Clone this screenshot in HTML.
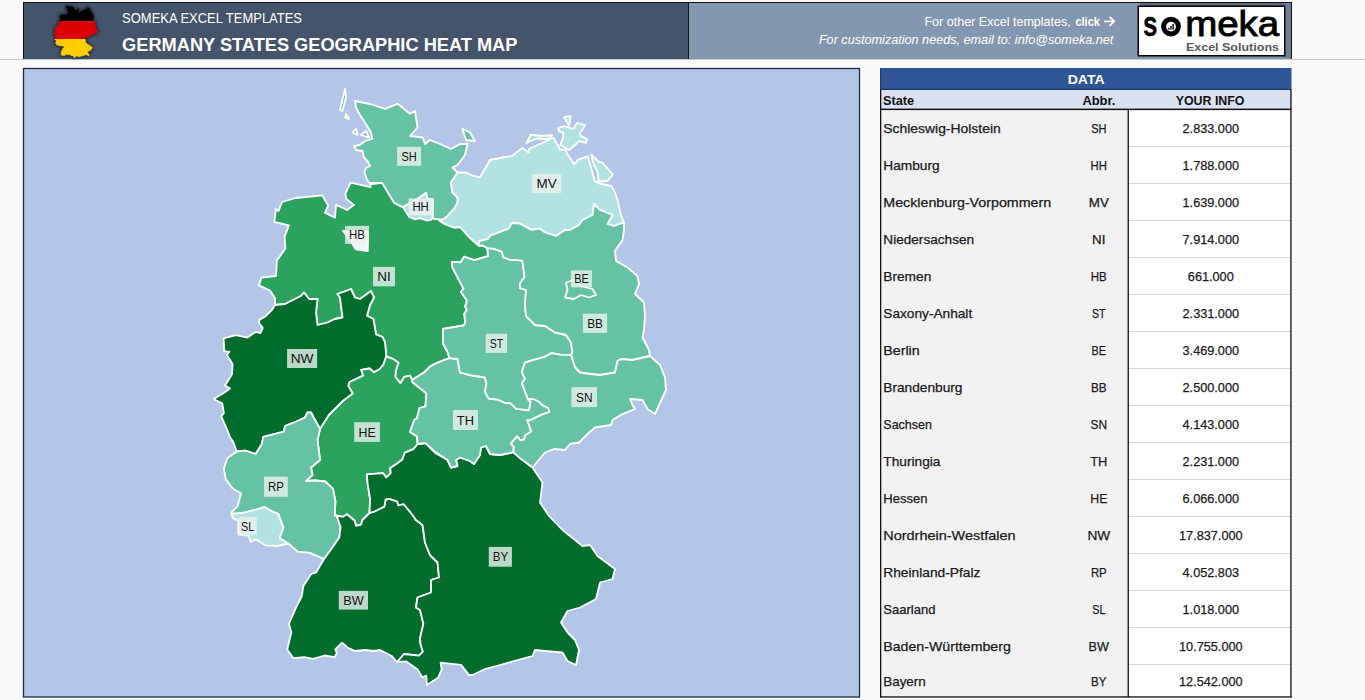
<!DOCTYPE html>
<html><head><meta charset="utf-8">
<style>
html,body{margin:0;padding:0;}
body{width:1365px;height:700px;overflow:hidden;background:#fafafa;position:relative;font-family:"Liberation Sans",sans-serif;}
.abs{position:absolute;}
svg{position:absolute;left:0;top:0;}
</style></head><body>
<svg width="1365" height="700" viewBox="0 0 1365 700" font-family="Liberation Sans, sans-serif">
<defs><linearGradient id="fg" gradientUnits="userSpaceOnUse" x1="0" y1="5" x2="0" y2="58">
<stop offset="0" stop-color="#000"/><stop offset="0.31" stop-color="#000"/><stop offset="0.31" stop-color="#dd0000"/><stop offset="0.65" stop-color="#dd0000"/><stop offset="0.65" stop-color="#ffce00"/><stop offset="1" stop-color="#ffce00"/></linearGradient></defs>
<!-- header -->
<rect x="23" y="2" width="1269" height="57" fill="#111"/>
<rect x="24" y="3" width="664" height="56" fill="#44546A"/>
<rect x="689" y="3" width="602" height="56" fill="#8497B0"/>
<rect x="0" y="59" width="1365" height="1" fill="#c8c8c8"/>
<filter id="blr" x="-20%" y="-20%" width="140%" height="140%"><feGaussianBlur stdDeviation="1.6"/></filter>
<g fill="#0b0f18" stroke="#0b0f18" stroke-width="2" filter="url(#blr)" opacity="0.75">
<polygon points="59.8,17.1 59.9,15.9 60.2,16.1 60.5,15.3 61.8,15.0 64.4,14.7 64.9,15.6 64.6,16.2 65.6,16.7 65.7,15.6 66.8,16.0 67.4,15.6 66.7,15.0 66.6,14.6 67.1,13.6 69.0,14.0 68.9,13.8 70.1,13.6 71.3,15.4 72.1,15.8 72.8,16.3 74.0,16.2 75.2,16.2 75.7,17.0 76.0,17.2 77.0,17.6 77.6,17.5 78.1,18.0 78.4,18.4 79.4,19.2 79.7,19.1 80.2,19.4 80.2,20.1 78.9,20.4 77.9,20.1 77.6,20.6 76.8,20.6 76.8,21.0 77.2,21.8 77.9,22.9 77.7,23.2 78.2,24.0 78.1,24.5 78.2,24.8 78.0,25.1 78.1,25.9 77.9,26.2 75.9,26.5 75.9,27.7 76.3,28.4 76.6,29.0 76.1,29.2 75.1,29.5 74.7,29.8 74.1,30.3 73.0,30.9 72.8,30.6 72.2,30.7 71.9,31.2 71.4,30.7 71.4,30.1 71.7,29.4 71.1,29.1 70.5,28.9 70.4,27.6 70.1,27.2 69.5,26.9 69.3,25.6 68.7,25.3 68.9,24.4 69.3,23.7 69.0,23.1 68.0,23.8 67.5,23.7 67.1,23.0 66.6,23.1 65.8,23.4 66.1,23.7 66.3,25.5 65.6,25.6 64.9,25.9 63.9,26.1 63.8,25.0 63.9,23.8 63.1,23.8 62.6,23.3 62.3,23.6 60.8,24.3 59.8,24.4 59.9,23.8 59.4,23.1 58.3,22.6 58.5,22.0 59.9,21.8 60.0,20.5 60.8,19.4 60.8,18.4 61.2,17.4"/>
<polygon points="67.5,6.5 68.9,6.7 70.4,7.1 71.6,6.7 72.8,7.6 73.3,7.3 73.5,8.8 72.8,9.5 74.0,9.7 74.2,10.2 74.7,9.9 75.7,10.2 76.7,10.7 77.6,10.2 78.3,10.2 78.0,11.2 77.3,12.1 76.8,12.3 77.3,12.7 76.7,13.6 76.8,14.5 77.3,14.9 77.3,15.4 77.0,15.9 76.4,16.6 75.9,16.9 75.1,16.8 74.9,16.7 75.0,15.1 74.4,15.0 74.3,14.5 73.5,15.0 72.1,15.8 71.3,15.4 70.1,13.6 68.9,13.6 68.7,13.4 68.4,12.7 68.6,12.3 68.9,12.2 68.7,11.7 68.4,11.4 68.2,10.8 67.6,10.8 67.4,10.4 68.0,10.3 68.5,10.0 69.2,9.8 69.0,9.2 68.6,8.5 68.0,7.7 67.6,7.0"/>
<polygon points="77.3,12.7 78.1,12.7 78.6,12.9 79.5,13.2 80.4,11.6 81.6,11.4 82.5,11.3 83.5,10.6 84.1,11.0 84.2,10.6 86.5,9.7 87.2,10.8 87.7,10.7 87.8,11.1 88.5,12.0 88.9,11.6 89.8,11.3 90.5,13.5 90.9,13.7 92.1,13.9 92.5,14.6 92.7,15.1 93.0,16.5 93.3,17.1 92.3,17.4 91.7,17.2 92.2,16.5 91.0,16.0 90.4,15.5 90.3,16.5 89.3,16.9 89.0,17.3 88.1,17.8 87.6,17.8 86.8,18.3 85.7,18.0 85.2,17.7 84.4,17.8 83.3,17.2 82.5,17.2 82.2,17.7 81.3,18.0 80.5,18.3 80.2,18.6 79.4,18.8 79.4,19.2 78.4,18.4 77.6,17.5 77.0,17.6 76.0,17.2 75.7,17.0 75.9,16.9 76.4,16.6 77.0,15.9 77.3,15.4 77.3,14.9 76.8,14.5 76.7,13.6"/>
<polygon points="59.8,24.4 60.8,24.3 62.3,23.6 62.6,23.3 63.1,23.8 63.9,23.8 63.8,25.0 63.9,26.1 64.9,25.9 65.6,25.6 66.3,25.5 66.1,23.7 65.8,23.4 66.6,23.1 67.1,23.0 67.5,23.7 68.0,23.8 69.0,23.1 69.3,23.7 68.9,24.4 68.7,25.3 69.3,25.6 69.5,26.9 70.1,27.2 70.4,27.6 70.5,28.9 70.3,29.5 69.9,30.0 69.3,30.3 68.9,29.9 68.1,30.0 68.3,30.6 67.0,31.1 66.9,31.4 67.3,32.1 66.4,32.8 65.0,34.0 64.2,35.2 63.7,34.5 63.3,33.8 63.0,33.8 62.7,34.2 62.0,34.5 60.8,35.0 60.7,35.5 58.7,35.9 58.6,36.6 58.0,37.4 57.0,37.1 56.2,37.2 55.8,36.4 55.5,35.9 55.3,35.3 54.7,34.1 54.9,33.8 54.8,33.0 54.1,32.7 54.0,32.6 54.9,32.1 55.5,31.7 55.0,31.4 55.7,30.4 55.8,29.5 55.2,28.7 55.5,28.5 55.0,28.4 54.9,27.3 56.1,27.0 57.2,27.2 58.0,26.7 58.4,26.8 58.7,26.4 58.3,25.9 58.4,25.6 58.9,25.4 59.5,24.8"/>
<polygon points="70.5,28.9 71.1,29.1 71.7,29.4 71.4,30.1 71.4,30.7 71.9,31.2 72.2,30.7 72.8,30.6 73.0,30.9 73.0,31.1 74.3,32.1 74.3,33.2 73.7,33.4 73.4,34.3 73.2,34.5 72.8,35.5 73.4,35.9 73.5,36.6 73.1,37.0 72.3,37.3 72.0,37.9 71.6,38.2 70.9,38.7 70.9,39.1 70.5,39.5 70.2,39.1 68.6,39.2 68.7,40.0 69.0,41.4 68.9,42.6 68.2,43.2 68.1,43.6 67.6,43.7 67.5,43.3 66.7,42.7 66.4,42.9 65.8,42.8 65.6,42.8 65.6,41.6 65.4,40.5 64.6,39.8 63.7,39.8 62.8,39.8 63.4,39.3 63.3,38.6 64.2,38.0 63.9,36.2 64.2,35.2 65.0,34.0 66.4,32.8 67.3,32.1 66.9,31.4 67.0,31.1 68.3,30.6 68.1,30.0 68.9,29.9 69.3,30.3 69.9,30.0 70.3,29.5"/>
<polygon points="64.2,35.2 63.7,34.5 63.3,33.8 63.0,33.8 62.7,34.2 62.0,34.5 60.8,35.0 60.7,35.5 58.7,35.9 58.6,36.6 58.0,37.4 57.0,37.1 56.2,37.2 55.3,37.8 54.9,38.7 55.1,39.6 55.8,40.4 56.6,40.9 56.3,42.0 55.7,42.6 55.7,42.7 56.8,42.6 57.9,42.3 58.8,42.1 59.6,42.5 60.2,42.7 60.6,43.9 60.3,44.8 61.1,45.3 62.0,46.0 63.2,46.1 64.5,46.7 65.4,45.6 66.0,44.8 66.1,43.9 65.8,42.8 65.6,42.8 65.6,41.6 65.4,40.5 64.6,39.8 63.7,39.8 62.8,39.8 63.4,39.3 63.3,38.6 64.2,38.0 63.9,36.2"/>
<polygon points="55.7,42.7 55.8,43.1 56.3,43.3 56.3,44.5 57.3,44.6 57.5,45.2 58.0,44.9 59.0,45.5 60.0,45.5 61.1,45.3 60.3,44.8 60.6,43.9 60.2,42.7 59.6,42.5 58.8,42.1 57.9,42.3 56.8,42.6"/>
<polygon points="64.5,46.7 65.4,45.6 66.0,44.8 66.1,43.9 65.8,42.8 66.4,42.9 66.7,42.7 67.5,43.3 67.6,43.7 68.1,43.6 68.2,43.2 68.9,42.6 69.3,42.5 70.3,42.1 70.4,41.4 70.8,41.4 71.5,41.6 71.7,41.9 72.2,41.8 72.8,42.5 73.0,42.8 73.4,43.2 74.0,43.7 74.2,45.2 74.7,46.3 75.4,47.0 75.6,48.3 74.8,48.5 74.8,49.6 73.5,50.0 73.4,50.9 73.7,51.1 74.1,52.3 73.7,53.6 73.8,54.1 74.0,54.8 73.6,55.1 72.2,55.0 71.5,55.7 71.0,55.1 69.9,54.6 69.3,54.7 68.5,54.6 67.5,54.7 66.8,54.4 66.3,54.0 65.6,54.6 65.8,54.9 65.5,55.3 64.6,55.1 63.5,55.4 62.7,55.3 61.6,55.3 61.0,54.6 61.4,53.1 61.2,52.3 61.8,51.0 62.4,49.9 62.6,49.0 63.3,48.0 63.8,47.8"/>
<polygon points="73.5,36.6 74.3,36.5 75.2,37.3 76.4,38.0 76.7,38.6 77.3,38.5 77.2,38.0 77.6,37.7 78.5,38.0 78.9,38.3 79.5,37.5 79.6,36.9 80.1,36.7 80.4,37.4 81.4,37.5 82.6,37.3 82.7,37.3 83.3,37.8 84.5,38.6 85.5,39.9 85.2,41.7 86.1,42.9 87.4,44.1 89.3,45.5 90.0,45.4 90.7,46.4 92.4,47.5 92.2,48.4 91.0,48.7 90.6,50.2 89.1,50.9 87.9,51.2 87.2,52.2 87.9,53.1 88.6,53.8 89.0,54.6 88.7,56.0 87.9,55.6 87.4,54.9 85.7,54.7 84.8,54.6 84.5,55.2 81.4,56.0 80.0,56.3 78.8,56.8 78.4,56.8 77.7,55.9 75.7,55.7 75.8,56.3 75.5,57.0 74.4,57.7 74.3,56.9 74.0,57.0 73.5,56.3 72.4,55.6 71.5,55.7 72.2,55.0 73.6,55.1 74.0,54.8 73.8,54.1 73.7,53.6 74.1,52.3 73.7,51.1 73.4,50.9 73.5,50.0 74.8,49.6 74.8,48.5 75.6,48.3 75.4,47.0 74.7,46.3 74.2,45.2 74.0,43.7 73.4,43.2 73.0,42.8 72.8,42.5 72.2,41.8 71.7,41.9 71.5,41.6 70.8,41.4 70.4,41.4 70.3,42.1 69.3,42.5 68.9,42.6 69.0,41.4 68.7,40.0 68.6,39.2 70.2,39.1 70.5,39.5 70.9,39.1 70.9,38.7 71.6,38.2 72.0,37.9 72.3,37.3 73.1,37.0"/>
<polygon points="73.0,30.9 74.1,30.3 74.7,29.8 75.1,29.5 76.1,29.2 76.6,29.0 77.3,29.1 77.6,30.3 78.5,30.5 80.0,30.7 80.1,31.3 80.0,32.0 80.3,32.6 81.2,32.7 81.8,32.9 82.4,33.0 83.0,33.5 83.6,33.5 84.2,33.6 84.3,32.9 84.1,32.7 84.5,32.6 85.1,32.9 85.4,33.1 86.0,33.4 86.1,33.7 85.3,34.0 84.4,34.4 84.0,34.4 84.2,35.1 84.4,35.5 83.8,35.8 83.7,36.2 83.3,36.2 83.0,35.9 82.4,36.5 82.7,36.8 82.7,37.3 82.6,37.3 81.4,37.5 80.4,37.4 80.1,36.7 79.6,36.9 79.5,37.5 78.9,38.3 78.5,38.0 77.6,37.7 77.2,38.0 77.3,38.5 76.7,38.6 76.4,38.0 75.1,37.2 74.3,36.5 73.5,36.6 73.4,35.9 72.8,35.5 73.2,34.5 73.4,34.3 73.7,33.4 74.3,33.2 74.3,32.1 73.0,31.1"/>
<polygon points="76.8,20.6 77.6,20.6 77.9,20.1 78.9,20.4 80.2,20.1 80.2,19.4 80.8,19.4 81.6,19.7 81.7,20.2 82.3,20.4 83.1,20.4 83.5,20.5 83.8,21.9 83.3,22.5 83.3,22.9 83.9,23.0 83.8,24.4 83.9,25.3 84.8,26.1 85.7,26.2 86.7,26.8 87.7,27.0 88.2,27.6 88.3,28.5 88.2,28.7 87.1,28.7 86.3,28.6 85.6,28.9 84.5,29.2 83.8,29.4 83.5,30.2 83.8,30.9 83.5,31.2 84.1,32.7 84.3,32.9 84.2,33.6 83.6,33.5 83.0,33.5 82.4,33.0 81.8,32.9 81.2,32.7 80.3,32.6 80.0,32.0 80.1,31.3 80.0,30.7 78.5,30.5 77.6,30.3 77.3,29.1 76.6,29.0 76.3,28.4 75.9,27.7 75.9,26.5 77.9,26.2 78.1,25.9 78.0,25.1 78.2,24.8 78.1,24.5 78.2,24.0 77.7,23.2 77.9,22.9 77.2,21.8 76.8,21.0"/>
<polygon points="79.4,19.2 79.4,18.8 80.2,18.6 80.5,18.3 81.3,18.0 82.2,17.7 82.5,17.2 83.3,17.2 84.4,17.8 85.2,17.7 85.7,18.0 86.8,18.3 87.6,17.8 88.1,17.8 89.0,17.3 89.3,16.9 90.3,16.5 90.4,15.5 91.0,16.0 92.2,16.5 91.7,17.2 92.3,17.4 93.3,17.1 93.3,17.8 93.1,18.7 92.4,19.6 92.5,20.5 93.6,21.1 94.6,21.8 94.7,22.5 94.3,23.4 95.2,24.1 95.3,25.3 95.2,26.6 95.0,27.2 95.7,28.3 95.8,28.8 94.1,29.2 93.0,29.1 92.7,29.3 92.4,30.3 91.0,30.5 90.0,30.4 89.1,30.3 88.6,29.8 88.2,28.7 88.3,28.5 88.2,27.6 87.7,27.0 86.7,26.8 85.7,26.2 84.8,26.1 83.9,25.3 83.8,24.4 83.9,23.0 83.3,22.9 83.3,22.5 83.8,21.9 83.5,20.5 83.1,20.4 82.3,20.4 81.7,20.2 81.6,19.7 80.8,19.4 80.2,19.4 79.7,19.1"/>
<polygon points="88.2,28.7 88.6,29.8 89.1,30.3 90.0,30.4 91.0,30.5 92.4,30.3 92.7,29.3 93.0,29.1 94.1,29.2 95.8,28.8 96.7,29.6 97.2,30.7 97.3,31.8 97.0,32.5 96.2,33.9 95.5,33.5 95.0,32.7 93.9,32.6 94.1,33.1 94.3,33.5 93.1,33.9 92.2,34.5 92.0,34.9 90.5,35.1 89.8,35.7 89.0,36.4 88.1,36.6 87.6,37.1 86.6,37.0 85.7,37.3 84.5,38.6 83.3,37.8 82.7,37.3 82.7,36.8 82.4,36.5 83.0,35.9 83.3,36.2 83.7,36.2 83.8,35.8 84.4,35.5 84.2,35.1 84.0,34.4 84.4,34.4 85.3,34.0 86.1,33.7 86.0,33.4 85.4,33.1 85.1,32.9 84.5,32.6 84.1,32.7 83.5,31.2 83.8,30.9 83.5,30.2 83.8,29.4 84.5,29.2 85.6,28.9 86.3,28.6 87.1,28.7"/>
<polygon points="87.7,22.4 88.5,22.2 89.2,22.7 90.3,23.0 90.6,23.5 89.9,23.7 89.2,23.5 88.5,23.8 87.6,23.7 87.9,23.0"/>
<polygon points="72.1,15.8 73.5,15.0 74.3,14.5 74.4,15.0 75.0,15.1 74.9,16.7 74.8,16.9 74.4,17.0 73.7,16.7 73.3,16.8 72.7,16.6"/>
<polygon points="66.3,17.8 66.8,18.0 67.8,17.9 68.8,18.0 68.8,19.0 68.7,19.6 67.6,19.5 67.2,18.9"/>
<polygon points="66.1,7.2 66.5,5.4 66.6,6.1 66.3,7.3"/>
<polygon points="66.6,7.6 66.9,8.0 66.5,7.9"/>
<polygon points="67.3,9.2 67.6,8.9 67.7,9.4"/>
<polygon points="68.1,9.4 68.6,9.1 68.8,9.7"/>
<polygon points="77.8,8.9 78.5,9.2 79.0,10.0 78.1,9.9"/>
<polygon points="87.0,8.8 87.5,8.7 88.5,8.9 88.8,8.4 89.6,8.6 89.1,9.3 89.1,9.5 89.8,9.8 89.6,10.1 89.0,10.0 88.0,10.8 87.2,10.3 87.4,9.8 87.5,9.2 87.0,9.1"/>
<polygon points="87.5,7.9 88.2,7.8 88.0,8.6"/>
<polygon points="84.0,10.1 84.3,9.4 85.4,9.5 86.4,9.5 86.0,9.8 85.0,9.7 84.3,10.0"/>
<polygon points="90.1,11.1 90.9,11.8 91.2,11.9 92.2,12.9 91.7,13.5 90.9,13.5 90.7,12.7 90.4,12.1"/>
</g>
<g fill="url(#fg)" stroke="url(#fg)" stroke-width="0.8">
<polygon points="59.8,17.1 59.9,15.9 60.2,16.1 60.5,15.3 61.8,15.0 64.4,14.7 64.9,15.6 64.6,16.2 65.6,16.7 65.7,15.6 66.8,16.0 67.4,15.6 66.7,15.0 66.6,14.6 67.1,13.6 69.0,14.0 68.9,13.8 70.1,13.6 71.3,15.4 72.1,15.8 72.8,16.3 74.0,16.2 75.2,16.2 75.7,17.0 76.0,17.2 77.0,17.6 77.6,17.5 78.1,18.0 78.4,18.4 79.4,19.2 79.7,19.1 80.2,19.4 80.2,20.1 78.9,20.4 77.9,20.1 77.6,20.6 76.8,20.6 76.8,21.0 77.2,21.8 77.9,22.9 77.7,23.2 78.2,24.0 78.1,24.5 78.2,24.8 78.0,25.1 78.1,25.9 77.9,26.2 75.9,26.5 75.9,27.7 76.3,28.4 76.6,29.0 76.1,29.2 75.1,29.5 74.7,29.8 74.1,30.3 73.0,30.9 72.8,30.6 72.2,30.7 71.9,31.2 71.4,30.7 71.4,30.1 71.7,29.4 71.1,29.1 70.5,28.9 70.4,27.6 70.1,27.2 69.5,26.9 69.3,25.6 68.7,25.3 68.9,24.4 69.3,23.7 69.0,23.1 68.0,23.8 67.5,23.7 67.1,23.0 66.6,23.1 65.8,23.4 66.1,23.7 66.3,25.5 65.6,25.6 64.9,25.9 63.9,26.1 63.8,25.0 63.9,23.8 63.1,23.8 62.6,23.3 62.3,23.6 60.8,24.3 59.8,24.4 59.9,23.8 59.4,23.1 58.3,22.6 58.5,22.0 59.9,21.8 60.0,20.5 60.8,19.4 60.8,18.4 61.2,17.4"/>
<polygon points="67.5,6.5 68.9,6.7 70.4,7.1 71.6,6.7 72.8,7.6 73.3,7.3 73.5,8.8 72.8,9.5 74.0,9.7 74.2,10.2 74.7,9.9 75.7,10.2 76.7,10.7 77.6,10.2 78.3,10.2 78.0,11.2 77.3,12.1 76.8,12.3 77.3,12.7 76.7,13.6 76.8,14.5 77.3,14.9 77.3,15.4 77.0,15.9 76.4,16.6 75.9,16.9 75.1,16.8 74.9,16.7 75.0,15.1 74.4,15.0 74.3,14.5 73.5,15.0 72.1,15.8 71.3,15.4 70.1,13.6 68.9,13.6 68.7,13.4 68.4,12.7 68.6,12.3 68.9,12.2 68.7,11.7 68.4,11.4 68.2,10.8 67.6,10.8 67.4,10.4 68.0,10.3 68.5,10.0 69.2,9.8 69.0,9.2 68.6,8.5 68.0,7.7 67.6,7.0"/>
<polygon points="77.3,12.7 78.1,12.7 78.6,12.9 79.5,13.2 80.4,11.6 81.6,11.4 82.5,11.3 83.5,10.6 84.1,11.0 84.2,10.6 86.5,9.7 87.2,10.8 87.7,10.7 87.8,11.1 88.5,12.0 88.9,11.6 89.8,11.3 90.5,13.5 90.9,13.7 92.1,13.9 92.5,14.6 92.7,15.1 93.0,16.5 93.3,17.1 92.3,17.4 91.7,17.2 92.2,16.5 91.0,16.0 90.4,15.5 90.3,16.5 89.3,16.9 89.0,17.3 88.1,17.8 87.6,17.8 86.8,18.3 85.7,18.0 85.2,17.7 84.4,17.8 83.3,17.2 82.5,17.2 82.2,17.7 81.3,18.0 80.5,18.3 80.2,18.6 79.4,18.8 79.4,19.2 78.4,18.4 77.6,17.5 77.0,17.6 76.0,17.2 75.7,17.0 75.9,16.9 76.4,16.6 77.0,15.9 77.3,15.4 77.3,14.9 76.8,14.5 76.7,13.6"/>
<polygon points="59.8,24.4 60.8,24.3 62.3,23.6 62.6,23.3 63.1,23.8 63.9,23.8 63.8,25.0 63.9,26.1 64.9,25.9 65.6,25.6 66.3,25.5 66.1,23.7 65.8,23.4 66.6,23.1 67.1,23.0 67.5,23.7 68.0,23.8 69.0,23.1 69.3,23.7 68.9,24.4 68.7,25.3 69.3,25.6 69.5,26.9 70.1,27.2 70.4,27.6 70.5,28.9 70.3,29.5 69.9,30.0 69.3,30.3 68.9,29.9 68.1,30.0 68.3,30.6 67.0,31.1 66.9,31.4 67.3,32.1 66.4,32.8 65.0,34.0 64.2,35.2 63.7,34.5 63.3,33.8 63.0,33.8 62.7,34.2 62.0,34.5 60.8,35.0 60.7,35.5 58.7,35.9 58.6,36.6 58.0,37.4 57.0,37.1 56.2,37.2 55.8,36.4 55.5,35.9 55.3,35.3 54.7,34.1 54.9,33.8 54.8,33.0 54.1,32.7 54.0,32.6 54.9,32.1 55.5,31.7 55.0,31.4 55.7,30.4 55.8,29.5 55.2,28.7 55.5,28.5 55.0,28.4 54.9,27.3 56.1,27.0 57.2,27.2 58.0,26.7 58.4,26.8 58.7,26.4 58.3,25.9 58.4,25.6 58.9,25.4 59.5,24.8"/>
<polygon points="70.5,28.9 71.1,29.1 71.7,29.4 71.4,30.1 71.4,30.7 71.9,31.2 72.2,30.7 72.8,30.6 73.0,30.9 73.0,31.1 74.3,32.1 74.3,33.2 73.7,33.4 73.4,34.3 73.2,34.5 72.8,35.5 73.4,35.9 73.5,36.6 73.1,37.0 72.3,37.3 72.0,37.9 71.6,38.2 70.9,38.7 70.9,39.1 70.5,39.5 70.2,39.1 68.6,39.2 68.7,40.0 69.0,41.4 68.9,42.6 68.2,43.2 68.1,43.6 67.6,43.7 67.5,43.3 66.7,42.7 66.4,42.9 65.8,42.8 65.6,42.8 65.6,41.6 65.4,40.5 64.6,39.8 63.7,39.8 62.8,39.8 63.4,39.3 63.3,38.6 64.2,38.0 63.9,36.2 64.2,35.2 65.0,34.0 66.4,32.8 67.3,32.1 66.9,31.4 67.0,31.1 68.3,30.6 68.1,30.0 68.9,29.9 69.3,30.3 69.9,30.0 70.3,29.5"/>
<polygon points="64.2,35.2 63.7,34.5 63.3,33.8 63.0,33.8 62.7,34.2 62.0,34.5 60.8,35.0 60.7,35.5 58.7,35.9 58.6,36.6 58.0,37.4 57.0,37.1 56.2,37.2 55.3,37.8 54.9,38.7 55.1,39.6 55.8,40.4 56.6,40.9 56.3,42.0 55.7,42.6 55.7,42.7 56.8,42.6 57.9,42.3 58.8,42.1 59.6,42.5 60.2,42.7 60.6,43.9 60.3,44.8 61.1,45.3 62.0,46.0 63.2,46.1 64.5,46.7 65.4,45.6 66.0,44.8 66.1,43.9 65.8,42.8 65.6,42.8 65.6,41.6 65.4,40.5 64.6,39.8 63.7,39.8 62.8,39.8 63.4,39.3 63.3,38.6 64.2,38.0 63.9,36.2"/>
<polygon points="55.7,42.7 55.8,43.1 56.3,43.3 56.3,44.5 57.3,44.6 57.5,45.2 58.0,44.9 59.0,45.5 60.0,45.5 61.1,45.3 60.3,44.8 60.6,43.9 60.2,42.7 59.6,42.5 58.8,42.1 57.9,42.3 56.8,42.6"/>
<polygon points="64.5,46.7 65.4,45.6 66.0,44.8 66.1,43.9 65.8,42.8 66.4,42.9 66.7,42.7 67.5,43.3 67.6,43.7 68.1,43.6 68.2,43.2 68.9,42.6 69.3,42.5 70.3,42.1 70.4,41.4 70.8,41.4 71.5,41.6 71.7,41.9 72.2,41.8 72.8,42.5 73.0,42.8 73.4,43.2 74.0,43.7 74.2,45.2 74.7,46.3 75.4,47.0 75.6,48.3 74.8,48.5 74.8,49.6 73.5,50.0 73.4,50.9 73.7,51.1 74.1,52.3 73.7,53.6 73.8,54.1 74.0,54.8 73.6,55.1 72.2,55.0 71.5,55.7 71.0,55.1 69.9,54.6 69.3,54.7 68.5,54.6 67.5,54.7 66.8,54.4 66.3,54.0 65.6,54.6 65.8,54.9 65.5,55.3 64.6,55.1 63.5,55.4 62.7,55.3 61.6,55.3 61.0,54.6 61.4,53.1 61.2,52.3 61.8,51.0 62.4,49.9 62.6,49.0 63.3,48.0 63.8,47.8"/>
<polygon points="73.5,36.6 74.3,36.5 75.2,37.3 76.4,38.0 76.7,38.6 77.3,38.5 77.2,38.0 77.6,37.7 78.5,38.0 78.9,38.3 79.5,37.5 79.6,36.9 80.1,36.7 80.4,37.4 81.4,37.5 82.6,37.3 82.7,37.3 83.3,37.8 84.5,38.6 85.5,39.9 85.2,41.7 86.1,42.9 87.4,44.1 89.3,45.5 90.0,45.4 90.7,46.4 92.4,47.5 92.2,48.4 91.0,48.7 90.6,50.2 89.1,50.9 87.9,51.2 87.2,52.2 87.9,53.1 88.6,53.8 89.0,54.6 88.7,56.0 87.9,55.6 87.4,54.9 85.7,54.7 84.8,54.6 84.5,55.2 81.4,56.0 80.0,56.3 78.8,56.8 78.4,56.8 77.7,55.9 75.7,55.7 75.8,56.3 75.5,57.0 74.4,57.7 74.3,56.9 74.0,57.0 73.5,56.3 72.4,55.6 71.5,55.7 72.2,55.0 73.6,55.1 74.0,54.8 73.8,54.1 73.7,53.6 74.1,52.3 73.7,51.1 73.4,50.9 73.5,50.0 74.8,49.6 74.8,48.5 75.6,48.3 75.4,47.0 74.7,46.3 74.2,45.2 74.0,43.7 73.4,43.2 73.0,42.8 72.8,42.5 72.2,41.8 71.7,41.9 71.5,41.6 70.8,41.4 70.4,41.4 70.3,42.1 69.3,42.5 68.9,42.6 69.0,41.4 68.7,40.0 68.6,39.2 70.2,39.1 70.5,39.5 70.9,39.1 70.9,38.7 71.6,38.2 72.0,37.9 72.3,37.3 73.1,37.0"/>
<polygon points="73.0,30.9 74.1,30.3 74.7,29.8 75.1,29.5 76.1,29.2 76.6,29.0 77.3,29.1 77.6,30.3 78.5,30.5 80.0,30.7 80.1,31.3 80.0,32.0 80.3,32.6 81.2,32.7 81.8,32.9 82.4,33.0 83.0,33.5 83.6,33.5 84.2,33.6 84.3,32.9 84.1,32.7 84.5,32.6 85.1,32.9 85.4,33.1 86.0,33.4 86.1,33.7 85.3,34.0 84.4,34.4 84.0,34.4 84.2,35.1 84.4,35.5 83.8,35.8 83.7,36.2 83.3,36.2 83.0,35.9 82.4,36.5 82.7,36.8 82.7,37.3 82.6,37.3 81.4,37.5 80.4,37.4 80.1,36.7 79.6,36.9 79.5,37.5 78.9,38.3 78.5,38.0 77.6,37.7 77.2,38.0 77.3,38.5 76.7,38.6 76.4,38.0 75.1,37.2 74.3,36.5 73.5,36.6 73.4,35.9 72.8,35.5 73.2,34.5 73.4,34.3 73.7,33.4 74.3,33.2 74.3,32.1 73.0,31.1"/>
<polygon points="76.8,20.6 77.6,20.6 77.9,20.1 78.9,20.4 80.2,20.1 80.2,19.4 80.8,19.4 81.6,19.7 81.7,20.2 82.3,20.4 83.1,20.4 83.5,20.5 83.8,21.9 83.3,22.5 83.3,22.9 83.9,23.0 83.8,24.4 83.9,25.3 84.8,26.1 85.7,26.2 86.7,26.8 87.7,27.0 88.2,27.6 88.3,28.5 88.2,28.7 87.1,28.7 86.3,28.6 85.6,28.9 84.5,29.2 83.8,29.4 83.5,30.2 83.8,30.9 83.5,31.2 84.1,32.7 84.3,32.9 84.2,33.6 83.6,33.5 83.0,33.5 82.4,33.0 81.8,32.9 81.2,32.7 80.3,32.6 80.0,32.0 80.1,31.3 80.0,30.7 78.5,30.5 77.6,30.3 77.3,29.1 76.6,29.0 76.3,28.4 75.9,27.7 75.9,26.5 77.9,26.2 78.1,25.9 78.0,25.1 78.2,24.8 78.1,24.5 78.2,24.0 77.7,23.2 77.9,22.9 77.2,21.8 76.8,21.0"/>
<polygon points="79.4,19.2 79.4,18.8 80.2,18.6 80.5,18.3 81.3,18.0 82.2,17.7 82.5,17.2 83.3,17.2 84.4,17.8 85.2,17.7 85.7,18.0 86.8,18.3 87.6,17.8 88.1,17.8 89.0,17.3 89.3,16.9 90.3,16.5 90.4,15.5 91.0,16.0 92.2,16.5 91.7,17.2 92.3,17.4 93.3,17.1 93.3,17.8 93.1,18.7 92.4,19.6 92.5,20.5 93.6,21.1 94.6,21.8 94.7,22.5 94.3,23.4 95.2,24.1 95.3,25.3 95.2,26.6 95.0,27.2 95.7,28.3 95.8,28.8 94.1,29.2 93.0,29.1 92.7,29.3 92.4,30.3 91.0,30.5 90.0,30.4 89.1,30.3 88.6,29.8 88.2,28.7 88.3,28.5 88.2,27.6 87.7,27.0 86.7,26.8 85.7,26.2 84.8,26.1 83.9,25.3 83.8,24.4 83.9,23.0 83.3,22.9 83.3,22.5 83.8,21.9 83.5,20.5 83.1,20.4 82.3,20.4 81.7,20.2 81.6,19.7 80.8,19.4 80.2,19.4 79.7,19.1"/>
<polygon points="88.2,28.7 88.6,29.8 89.1,30.3 90.0,30.4 91.0,30.5 92.4,30.3 92.7,29.3 93.0,29.1 94.1,29.2 95.8,28.8 96.7,29.6 97.2,30.7 97.3,31.8 97.0,32.5 96.2,33.9 95.5,33.5 95.0,32.7 93.9,32.6 94.1,33.1 94.3,33.5 93.1,33.9 92.2,34.5 92.0,34.9 90.5,35.1 89.8,35.7 89.0,36.4 88.1,36.6 87.6,37.1 86.6,37.0 85.7,37.3 84.5,38.6 83.3,37.8 82.7,37.3 82.7,36.8 82.4,36.5 83.0,35.9 83.3,36.2 83.7,36.2 83.8,35.8 84.4,35.5 84.2,35.1 84.0,34.4 84.4,34.4 85.3,34.0 86.1,33.7 86.0,33.4 85.4,33.1 85.1,32.9 84.5,32.6 84.1,32.7 83.5,31.2 83.8,30.9 83.5,30.2 83.8,29.4 84.5,29.2 85.6,28.9 86.3,28.6 87.1,28.7"/>
<polygon points="87.7,22.4 88.5,22.2 89.2,22.7 90.3,23.0 90.6,23.5 89.9,23.7 89.2,23.5 88.5,23.8 87.6,23.7 87.9,23.0"/>
<polygon points="72.1,15.8 73.5,15.0 74.3,14.5 74.4,15.0 75.0,15.1 74.9,16.7 74.8,16.9 74.4,17.0 73.7,16.7 73.3,16.8 72.7,16.6"/>
<polygon points="66.3,17.8 66.8,18.0 67.8,17.9 68.8,18.0 68.8,19.0 68.7,19.6 67.6,19.5 67.2,18.9"/>
<polygon points="66.1,7.2 66.5,5.4 66.6,6.1 66.3,7.3"/>
<polygon points="66.6,7.6 66.9,8.0 66.5,7.9"/>
<polygon points="67.3,9.2 67.6,8.9 67.7,9.4"/>
<polygon points="68.1,9.4 68.6,9.1 68.8,9.7"/>
<polygon points="77.8,8.9 78.5,9.2 79.0,10.0 78.1,9.9"/>
<polygon points="87.0,8.8 87.5,8.7 88.5,8.9 88.8,8.4 89.6,8.6 89.1,9.3 89.1,9.5 89.8,9.8 89.6,10.1 89.0,10.0 88.0,10.8 87.2,10.3 87.4,9.8 87.5,9.2 87.0,9.1"/>
<polygon points="87.5,7.9 88.2,7.8 88.0,8.6"/>
<polygon points="84.0,10.1 84.3,9.4 85.4,9.5 86.4,9.5 86.0,9.8 85.0,9.7 84.3,10.0"/>
<polygon points="90.1,11.1 90.9,11.8 91.2,11.9 92.2,12.9 91.7,13.5 90.9,13.5 90.7,12.7 90.4,12.1"/>
</g>
<!-- logo -->
<rect x="1140" y="3" width="151" height="4" fill="#5d6b80"/>
<rect x="1284" y="3" width="7" height="55" fill="#6f7f96"/>
<rect x="1138.25" y="6.25" width="146.5" height="49.5" fill="#fff" stroke="#000" stroke-width="1.5"/>
<circle cx="1171" cy="26.6" r="7.4" fill="none" stroke="#000" stroke-width="5"/>
<rect x="1168.2" y="27.8" width="1.3" height="1.8" fill="#000"/><rect x="1170.3" y="26" width="1.3" height="3.6" fill="#000"/><rect x="1172.4" y="24" width="1.4" height="5.6" fill="#000"/>
<!-- map panel -->
<rect x="23.5" y="68.5" width="836" height="628.5" fill="#B4C6E7" stroke="#1b2a4a" stroke-width="1.3"/>
<g stroke="#fff" stroke-width="1.8" stroke-linejoin="round">
<polygon points="274.3,222.0 276.0,209.0 278.6,211.0 282.0,202.0 295.7,198.0 322.3,195.4 328.3,205.7 324.9,212.6 335.0,217.7 336.0,204.9 347.1,210.0 354.0,204.9 346.3,198.9 345.4,193.7 350.6,182.6 370.7,187.1 370.0,184.3 382.1,182.9 394.3,202.9 402.9,207.1 410.0,213.0 422.5,212.0 435.0,212.0 440.0,221.0 444.0,223.6 454.3,227.6 460.0,227.0 465.7,232.7 468.6,236.7 478.9,245.9 482.3,245.3 487.4,248.1 488.0,256.1 474.3,260.1 464.0,256.7 460.6,262.4 452.0,261.9 452.3,267.2 456.6,275.7 463.5,288.6 460.9,292.0 466.9,300.6 465.2,306.6 466.9,310.0 464.3,313.5 465.2,322.9 463.5,325.5 442.9,328.9 442.9,343.5 447.2,351.2 449.7,358.1 444.6,359.8 434.3,364.1 430.0,366.6 424.0,372.5 412.0,380.0 410.0,375.6 404.3,376.8 400.4,383.3 395.3,376.8 395.9,370.4 398.5,362.7 392.7,358.8 386.3,356.3 385.0,342.1 382.4,337.0 376.0,334.4 373.4,319.0 367.0,315.8 370.0,305.0 374.0,297.5 371.0,291.0 360.0,299.0 355.0,297.5 351.0,289.0 346.0,291.0 337.5,294.0 340.0,297.5 342.5,317.5 335.0,319.0 327.5,322.5 317.5,325.0 316.0,312.5 317.5,299.0 309.0,299.0 304.0,292.5 301.0,296.0 285.0,304.0 275.0,305.0 275.1,298.3 270.0,290.6 258.9,285.4 261.4,277.7 276.0,276.0 276.9,260.6 285.4,248.6 284.6,236.6 288.9,225.4" fill="#2ca25f"/>
<polygon points="355.0,101.0 370.0,104.0 385.0,108.8 397.5,103.8 410.0,113.8 415.0,111.0 417.5,127.5 410.0,136.0 422.5,137.5 425.0,144.0 430.0,140.0 440.0,144.0 451.0,149.0 460.0,144.0 467.5,144.0 465.0,155.0 457.5,165.0 452.5,167.5 457.5,172.5 451.0,182.5 452.5,192.5 457.5,197.5 457.7,202.4 454.3,208.7 447.4,216.1 442.9,219.6 434.3,219.0 432.6,217.9 432.7,199.0 427.0,198.7 426.1,192.7 417.9,198.7 402.9,207.1 394.3,202.9 382.1,182.9 369.3,182.9 367.1,180.0 364.3,172.0 366.0,168.0 370.0,166.0 367.5,161.0 364.0,157.5 362.5,151.0 356.0,150.0 354.0,146.0 360.0,145.0 365.0,141.0 372.5,139.0 371.0,132.5 366.0,124.0 360.0,115.0 356.0,107.5" fill="#66c2a4"/>
<polygon points="457.5,172.5 466.0,172.5 471.0,175.0 480.0,177.5 490.0,160.0 502.5,157.5 512.0,156.0 522.2,148.1 528.6,152.6 529.3,148.7 553.7,137.8 560.2,150.0 565.3,149.4 567.2,153.9 574.3,164.2 578.2,159.7 587.8,156.4 594.9,180.9 599.4,183.5 611.6,186.0 615.5,193.7 617.5,200.0 621.0,215.0 624.0,222.5 614.0,226.0 607.5,224.0 612.5,215.0 600.0,210.0 594.0,204.0 592.5,215.0 582.5,220.0 579.0,225.0 570.0,230.0 565.0,230.0 556.0,236.0 545.0,232.5 540.0,228.7 531.4,229.9 520.0,223.6 512.0,223.0 508.6,228.7 499.4,232.1 490.3,235.6 488.0,239.0 478.9,241.3 478.9,245.9 468.6,236.7 460.0,227.0 454.3,227.6 444.0,223.6 440.0,221.0 442.9,219.6 447.4,216.1 454.3,208.7 457.7,202.4 457.5,197.5 452.5,192.5 451.0,182.5" fill="#b2e2e2"/>
<polygon points="275.0,305.0 285.0,304.0 301.0,296.0 304.0,292.5 309.0,299.0 317.5,299.0 316.0,312.5 317.5,325.0 327.5,322.5 335.0,319.0 342.5,317.5 340.0,297.5 337.5,294.0 346.0,291.0 351.0,289.0 355.0,297.5 360.0,299.0 371.0,291.0 374.0,297.5 370.0,305.0 367.0,315.8 373.4,319.0 376.0,334.4 382.4,337.0 385.0,342.1 386.3,356.3 383.7,364.0 379.8,369.0 374.0,372.3 369.6,368.5 361.2,369.8 363.1,375.6 349.6,382.0 348.4,385.8 352.9,393.5 343.0,401.0 329.0,415.0 320.0,429.0 315.0,420.0 311.0,412.5 307.5,412.5 305.0,417.5 297.5,421.0 285.0,426.0 283.9,431.7 263.3,436.9 261.6,444.6 255.6,454.0 245.3,450.6 236.7,451.5 233.3,442.0 229.9,436.9 227.3,430.0 221.3,416.3 223.9,412.9 222.2,403.4 215.3,400.0 214.0,398.7 223.0,393.5 230.0,388.4 224.9,385.8 232.0,374.3 232.6,364.0 226.9,355.0 229.4,351.8 224.3,351.1 223.6,338.3 235.8,335.1 247.4,337.6 255.8,331.9 260.3,333.1 262.8,328.0 259.0,322.9 259.6,319.6 265.4,316.4 271.8,310.0" fill="#006d2c"/>
<polygon points="386.3,356.3 392.7,358.8 398.5,362.7 395.9,370.4 395.3,376.8 400.4,383.3 404.3,376.8 410.0,375.6 412.0,380.0 412.6,382.3 426.3,393.4 425.5,406.3 419.5,408.0 416.9,418.3 414.3,420.0 410.0,432.0 416.9,436.3 417.7,444.0 413.4,449.2 404.9,452.6 402.3,459.5 398.0,462.9 390.3,468.1 390.7,473.1 386.2,477.6 383.0,473.1 366.9,474.4 367.6,483.4 370.1,498.8 369.5,513.0 362.4,520.0 361.1,524.6 356.0,525.8 354.7,520.7 347.0,514.3 343.1,516.8 336.7,515.6 334.8,515.6 335.4,501.4 332.9,488.6 325.1,481.5 315.0,480.5 306.0,481.0 312.5,475.0 311.0,467.5 320.0,460.0 317.5,440.0 320.0,429.0 329.0,415.0 343.0,401.0 352.9,393.5 348.4,385.8 349.6,382.0 363.1,375.6 361.2,369.8 369.6,368.5 374.0,372.3 379.8,369.0 383.7,364.0" fill="#2ca25f"/>
<polygon points="320.0,429.0 315.0,420.0 311.0,412.5 307.5,412.5 305.0,417.5 297.5,421.0 285.0,426.0 283.9,431.7 263.3,436.9 261.6,444.6 255.6,454.0 245.3,450.6 236.7,451.5 227.3,458.3 223.9,468.6 225.6,478.9 232.4,488.3 241.0,493.5 237.6,506.3 231.6,512.3 231.4,514.0 242.9,512.9 254.3,510.0 264.6,507.1 272.6,511.7 278.3,514.0 283.4,527.7 279.4,538.0 288.6,543.7 297.7,551.7 310.0,552.9 324.0,559.0 332.5,547.5 339.3,537.4 340.6,527.1 336.7,515.6 334.8,515.6 335.4,501.4 332.9,488.6 325.1,481.5 315.0,480.5 306.0,481.0 312.5,475.0 311.0,467.5 320.0,460.0 317.5,440.0" fill="#66c2a4"/>
<polygon points="231.4,514.0 232.6,518.0 238.3,520.9 238.3,534.6 248.6,535.7 250.9,542.0 255.4,539.1 265.7,545.4 277.1,546.0 288.6,543.7 279.4,538.0 283.4,527.7 278.3,514.0 272.6,511.7 264.6,507.1 254.3,510.0 242.9,512.9" fill="#b2e2e2"/>
<polygon points="324.0,559.0 332.5,547.5 339.3,537.4 340.6,527.1 336.7,515.6 343.1,516.8 347.0,514.3 354.7,520.7 356.0,525.8 361.1,524.6 362.4,520.0 369.5,513.0 374.0,511.7 384.3,506.6 385.6,499.5 389.4,498.8 397.1,501.4 398.4,505.3 403.5,504.0 410.0,511.7 412.5,515.0 416.0,520.0 422.5,525.0 425.0,542.5 430.0,555.0 437.5,562.5 439.0,577.5 431.0,580.0 431.0,592.5 417.5,597.5 416.0,607.5 420.0,610.0 423.4,623.7 420.0,638.6 420.6,644.3 422.9,651.7 418.9,655.7 404.0,654.0 397.1,662.0 391.4,655.7 380.0,650.0 374.0,651.0 365.0,650.0 355.0,651.0 347.5,647.5 342.0,642.6 335.2,649.5 336.9,652.9 334.3,657.2 324.9,655.5 312.9,658.9 304.3,657.2 293.2,658.1 287.2,649.5 291.4,632.3 288.9,623.8 295.7,608.3 301.7,596.3 303.4,586.0 311.2,574.0 316.3,572.3" fill="#006d2c"/>
<polygon points="417.7,444.0 425.5,443.2 434.9,452.6 447.5,460.0 451.0,467.5 457.5,466.0 456.0,460.0 460.0,457.5 470.0,461.0 474.0,464.0 480.0,455.0 481.0,447.5 486.0,446.0 490.0,454.0 500.0,455.0 512.4,452.5 513.2,452.0 520.2,458.3 532.5,467.5 542.5,482.5 540.0,502.5 549.0,516.0 562.5,530.0 582.5,546.0 590.0,545.0 597.5,556.0 615.0,569.0 612.5,579.0 600.0,582.5 596.0,599.0 580.0,607.5 567.5,611.0 561.0,622.5 567.5,632.5 575.0,640.0 579.0,650.0 576.0,665.0 567.5,661.0 562.5,652.5 545.0,651.0 535.0,650.0 532.5,656.0 500.0,665.0 485.0,669.0 472.5,675.0 469.1,675.1 461.1,664.9 440.6,662.6 441.7,669.4 438.3,677.4 426.9,684.9 426.3,675.7 422.3,677.4 417.7,669.4 406.3,661.4 397.1,662.0 404.0,654.0 418.9,655.7 422.9,651.7 420.6,644.3 420.0,638.6 423.4,623.7 420.0,610.0 416.0,607.5 417.5,597.5 431.0,592.5 431.0,580.0 439.0,577.5 437.5,562.5 430.0,555.0 425.0,542.5 422.5,525.0 416.0,520.0 412.5,515.0 410.0,511.7 403.5,504.0 398.4,505.3 397.1,501.4 389.4,498.8 385.6,499.5 384.3,506.6 374.0,511.7 369.5,513.0 370.1,498.8 367.6,483.4 366.9,474.4 383.0,473.1 386.2,477.6 390.7,473.1 390.3,468.1 398.0,462.9 402.3,459.5 404.9,452.6 413.4,449.2" fill="#006d2c"/>
<polygon points="412.0,380.0 424.0,372.5 430.0,366.6 434.3,364.1 444.6,359.8 449.7,358.1 457.5,359.0 460.0,372.5 470.0,375.1 484.9,377.5 486.5,383.8 484.9,391.6 488.8,398.7 497.5,399.5 504.5,402.6 510.8,403.4 516.3,408.9 523.4,409.7 528.9,410.4 530.4,401.8 528.1,399.5 532.8,398.7 539.1,401.8 542.2,405.0 548.5,408.1 549.3,412.0 540.6,415.1 531.2,419.9 527.3,419.9 529.7,426.9 531.2,431.6 525.0,435.6 524.2,439.5 520.2,440.3 517.1,436.3 510.8,443.4 514.0,447.3 513.2,452.0 512.4,452.5 500.0,455.0 490.0,454.0 486.0,446.0 481.0,447.5 480.0,455.0 474.0,464.0 470.0,461.0 460.0,457.5 456.0,460.0 457.5,466.0 451.0,467.5 447.5,460.0 434.0,451.0 425.5,443.2 417.7,444.0 416.9,436.3 410.0,432.0 414.3,420.0 416.9,418.3 419.5,408.0 425.5,406.3 426.3,393.4 412.6,382.3" fill="#66c2a4"/>
<polygon points="452.0,261.9 460.6,262.4 464.0,256.7 474.3,260.1 488.0,256.1 487.4,248.1 493.7,248.7 501.7,251.6 503.4,257.3 509.7,259.6 517.7,260.1 522.3,260.7 524.6,276.7 520.0,283.6 520.0,288.1 526.0,290.0 525.0,305.0 526.0,316.0 535.0,325.0 545.0,326.0 555.0,332.5 566.0,335.0 571.0,342.5 572.5,352.5 571.0,355.0 560.0,354.7 551.6,353.1 543.8,357.1 532.8,360.2 525.0,362.6 521.8,372.0 525.0,379.0 521.8,383.0 528.1,399.5 530.4,401.8 528.9,410.4 523.4,409.7 516.3,408.9 510.8,403.4 504.5,402.6 497.5,399.5 488.8,398.7 484.9,391.6 486.5,383.8 484.9,377.5 470.0,375.1 460.0,372.5 457.5,359.0 449.7,358.1 447.2,351.2 442.9,343.5 442.9,328.9 463.5,325.5 465.2,322.9 464.3,313.5 466.9,310.0 465.2,306.6 466.9,300.6 460.9,292.0 463.5,288.6 456.6,275.7 452.3,267.2" fill="#66c2a4"/>
<polygon points="478.9,245.9 478.9,241.3 488.0,239.0 490.3,235.6 499.4,232.1 508.6,228.7 512.0,223.0 520.0,223.6 531.4,229.9 540.0,228.7 545.0,232.5 556.0,236.0 565.0,230.0 570.0,230.0 579.0,225.0 582.5,220.0 592.5,215.0 594.0,204.0 600.0,210.0 612.5,215.0 607.5,224.0 614.0,226.0 624.0,222.5 624.0,230.0 622.5,240.0 615.0,251.0 616.0,261.0 627.5,267.5 637.5,276.0 639.0,284.0 635.0,294.0 644.0,302.5 645.0,316.0 644.0,330.0 642.5,337.5 649.0,350.0 650.0,356.0 632.5,360.0 621.0,359.0 617.5,361.0 615.0,372.5 600.0,375.0 590.0,374.0 580.0,372.5 575.0,367.5 571.0,355.0 572.5,352.5 571.0,342.5 566.0,335.0 555.0,332.5 545.0,326.0 535.0,325.0 526.0,316.0 525.0,305.0 526.0,290.0 520.0,288.1 520.0,283.6 524.6,276.7 522.3,260.7 517.7,260.1 509.7,259.6 503.4,257.3 501.7,251.6 493.7,248.7 487.4,248.1 482.3,245.3" fill="#66c2a4"/>
<polygon points="571.0,355.0 575.0,367.5 580.0,372.5 590.0,374.0 600.0,375.0 615.0,372.5 617.5,361.0 621.0,359.0 632.5,360.0 650.0,356.0 660.0,365.0 665.0,377.5 666.0,390.0 662.5,397.5 655.0,414.0 647.5,409.0 642.5,400.0 630.0,399.0 632.5,405.0 635.0,409.0 622.5,414.0 612.5,420.0 611.0,425.0 595.0,427.5 587.5,434.0 579.0,442.5 570.0,444.0 565.0,450.0 554.0,449.0 545.0,452.5 532.5,467.5 520.2,458.3 513.2,452.0 514.0,447.3 510.8,443.4 517.1,436.3 520.2,440.3 524.2,439.5 525.0,435.6 531.2,431.6 529.7,426.9 527.3,419.9 531.2,419.9 540.6,415.1 549.3,412.0 548.5,408.1 542.2,405.0 539.1,401.8 532.8,398.7 528.1,399.5 521.8,383.0 525.0,379.0 521.8,372.0 525.0,362.6 532.8,360.2 543.8,357.1 551.6,353.1 560.0,354.7" fill="#66c2a4"/>
<polygon points="566.0,282.5 574.0,280.0 581.0,286.0 592.5,289.0 596.0,295.0 589.0,297.5 581.0,295.0 574.0,299.0 565.0,297.5 567.5,290.0" fill="#66c2a4"/>
<polygon points="402.9,207.1 417.9,198.7 426.1,192.7 427.0,198.7 432.7,199.0 432.6,217.9 430.9,219.8 426.9,220.7 420.0,218.2 415.0,219.3 409.3,217.0" fill="#b2e2e2"/>
<polygon points="342.9,230.6 348.0,232.0 358.0,231.0 368.0,232.0 368.0,243.4 367.7,251.1 355.7,249.4 352.0,243.0" fill="#edf8fb"/>
<polygon points="340.0,110.0 345.0,89.0 346.0,97.0 342.5,111.0" fill="#66c2a4"/>
<polygon points="346.0,114.0 349.0,119.0 345.0,117.5" fill="#66c2a4"/>
<polygon points="352.5,132.5 356.0,129.0 357.5,135.0" fill="#66c2a4"/>
<polygon points="361.0,135.0 366.0,131.0 369.0,137.5" fill="#66c2a4"/>
<polygon points="462.5,128.8 470.0,132.5 475.0,141.0 466.0,140.0" fill="#66c2a4"/>
<polygon points="558.2,128.2 564.0,126.2 573.7,128.8 576.9,123.0 585.2,125.0 580.0,133.3 580.7,135.9 587.2,139.1 585.9,142.9 579.5,141.0 569.2,150.0 560.2,144.9 562.7,139.1 563.4,132.7 558.9,131.4" fill="#b2e2e2"/>
<polygon points="564.0,117.2 570.5,115.9 569.2,125.6" fill="#b2e2e2"/>
<polygon points="526.7,143.0 530.6,134.6 542.0,136.0 552.4,135.2 548.0,139.5 538.0,138.5 530.0,141.0" fill="#b2e2e2"/>
<polygon points="591.0,154.5 598.7,161.6 602.6,162.9 612.9,174.5 607.7,180.9 598.7,181.5 597.5,171.9 594.0,165.0" fill="#b2e2e2"/>
</g>
<g>
<rect x="397.1" y="146.8" width="24" height="19" fill="#ebf2ee" fill-opacity="0.8"/>
<text x="401.45" y="160.80" font-size="12.6" fill="#111" textLength="15.30" lengthAdjust="spacingAndGlyphs">SH</text>
<rect x="408.6" y="198.4" width="24" height="17" fill="#ebf2ee" fill-opacity="0.8"/>
<text x="412.40" y="211.40" font-size="12.6" fill="#111" textLength="16.40" lengthAdjust="spacingAndGlyphs">HH</text>
<rect x="532.1" y="174.1" width="29" height="19" fill="#ebf2ee" fill-opacity="0.8"/>
<text x="536.55" y="188.10" font-size="12.6" fill="#111" textLength="20.10" lengthAdjust="spacingAndGlyphs">MV</text>
<rect x="345.0" y="225.9" width="24" height="18" fill="#ebf2ee" fill-opacity="0.8"/>
<text x="349.00" y="239.40" font-size="12.6" fill="#111" textLength="16.00" lengthAdjust="spacingAndGlyphs">HB</text>
<rect x="373.0" y="266.9" width="22" height="19.4" fill="#ebf2ee" fill-opacity="0.8"/>
<text x="377.30" y="281.10" font-size="12.6" fill="#111" textLength="13.40" lengthAdjust="spacingAndGlyphs">NI</text>
<rect x="570.9" y="270.4" width="21" height="17" fill="#ebf2ee" fill-opacity="0.8"/>
<text x="574.20" y="283.40" font-size="12.6" fill="#111" textLength="14.40" lengthAdjust="spacingAndGlyphs">BE</text>
<rect x="287.1" y="349.0" width="30" height="19" fill="#ebf2ee" fill-opacity="0.8"/>
<text x="290.70" y="363.00" font-size="12.6" fill="#111" textLength="22.80" lengthAdjust="spacingAndGlyphs">NW</text>
<rect x="485.7" y="333.7" width="21.4" height="19.2" fill="#ebf2ee" fill-opacity="0.8"/>
<text x="489.65" y="347.80" font-size="12.6" fill="#111" textLength="13.50" lengthAdjust="spacingAndGlyphs">ST</text>
<rect x="582.9" y="313.7" width="24.2" height="19.2" fill="#ebf2ee" fill-opacity="0.8"/>
<text x="587.15" y="327.80" font-size="12.6" fill="#111" textLength="15.70" lengthAdjust="spacingAndGlyphs">BB</text>
<rect x="571.4" y="387.1" width="25.7" height="20" fill="#ebf2ee" fill-opacity="0.8"/>
<text x="576.00" y="401.60" font-size="12.6" fill="#111" textLength="16.60" lengthAdjust="spacingAndGlyphs">SN</text>
<rect x="452.9" y="410.0" width="25" height="20" fill="#ebf2ee" fill-opacity="0.8"/>
<text x="456.80" y="424.50" font-size="12.6" fill="#111" textLength="17.20" lengthAdjust="spacingAndGlyphs">TH</text>
<rect x="354.2" y="422.2" width="25.7" height="19.7" fill="#ebf2ee" fill-opacity="0.8"/>
<text x="358.55" y="436.60" font-size="12.6" fill="#111" textLength="17.10" lengthAdjust="spacingAndGlyphs">HE</text>
<rect x="264.1" y="476.6" width="23.7" height="20.2" fill="#ebf2ee" fill-opacity="0.8"/>
<text x="268.10" y="491.20" font-size="12.6" fill="#111" textLength="15.80" lengthAdjust="spacingAndGlyphs">RP</text>
<rect x="238.4" y="517.2" width="18.4" height="17.5" fill="#ebf2ee" fill-opacity="0.8"/>
<text x="241.00" y="530.50" font-size="12.6" fill="#111" textLength="13.20" lengthAdjust="spacingAndGlyphs">SL</text>
<rect x="338.8" y="590.9" width="29.2" height="18.7" fill="#ebf2ee" fill-opacity="0.8"/>
<text x="343.20" y="604.80" font-size="12.6" fill="#111" textLength="20.40" lengthAdjust="spacingAndGlyphs">BW</text>
<rect x="488.8" y="546.9" width="23.1" height="19.8" fill="#ebf2ee" fill-opacity="0.8"/>
<text x="492.70" y="561.30" font-size="12.6" fill="#111" textLength="15.40" lengthAdjust="spacingAndGlyphs">BY</text>
</g>
<!-- table -->
<rect x="880" y="68" width="411.5" height="21.5" fill="#2F5597"/>
<rect x="880" y="68" width="1" height="21.5" fill="#203d75"/>
<rect x="880" y="88.8" width="411.5" height="1.2" fill="#1c3366"/>
<rect x="880" y="90" width="411.5" height="19" fill="#D9E1F2"/>
<rect x="880" y="109.5" width="248" height="588" fill="#F2F2F2"/>
<rect x="1128" y="109.5" width="163" height="588" fill="#fff"/>
<rect x="1129" y="146" width="162" height="1" fill="#d9d9d9"/><rect x="1129" y="183" width="162" height="1" fill="#d9d9d9"/><rect x="1129" y="220" width="162" height="1" fill="#d9d9d9"/><rect x="1129" y="257" width="162" height="1" fill="#d9d9d9"/><rect x="1129" y="294" width="162" height="1" fill="#d9d9d9"/><rect x="1129" y="331" width="162" height="1" fill="#d9d9d9"/><rect x="1129" y="368" width="162" height="1" fill="#d9d9d9"/><rect x="1129" y="405" width="162" height="1" fill="#d9d9d9"/><rect x="1129" y="442" width="162" height="1" fill="#d9d9d9"/><rect x="1129" y="479" width="162" height="1" fill="#d9d9d9"/><rect x="1129" y="516" width="162" height="1" fill="#d9d9d9"/><rect x="1129" y="553" width="162" height="1" fill="#d9d9d9"/><rect x="1129" y="590" width="162" height="1" fill="#d9d9d9"/><rect x="1129" y="627" width="162" height="1" fill="#d9d9d9"/><rect x="1129" y="664" width="162" height="1" fill="#d9d9d9"/>
<rect x="880" y="90" width="1.3" height="607.5" fill="#111"/>
<rect x="1290.3" y="90" width="1.3" height="607.5" fill="#111"/>
<rect x="880" y="696.3" width="411.6" height="1.3" fill="#111"/>
<rect x="880" y="108.6" width="411.6" height="1.5" fill="#111"/>
<rect x="1127.6" y="109" width="1.3" height="588" fill="#111"/>
<text x="122.10" y="22.70" font-size="13.8" fill="#fff" textLength="179.90" lengthAdjust="spacingAndGlyphs">SOMEKA EXCEL TEMPLATES</text>
<text x="122.10" y="50.50" font-size="18.8" font-weight="bold" fill="#fff" textLength="395.30" lengthAdjust="spacingAndGlyphs">GERMANY STATES GEOGRAPHIC HEAT MAP</text>
<text x="924.40" y="25.90" font-size="13.4" fill="#fff" textLength="146.41" lengthAdjust="spacingAndGlyphs">For other Excel templates,</text>
<text x="1075.40" y="25.90" font-size="13.4" font-weight="bold" fill="#fff" textLength="24.58" lengthAdjust="spacingAndGlyphs">click</text>
<text x="818.90" y="43.90" font-size="13.0" font-style="italic" fill="#fff" textLength="294.46" lengthAdjust="spacingAndGlyphs">For customization needs, email to: info@someka.net</text>
<text x="1067.70" y="83.90" font-size="13.6" font-weight="bold" fill="#fff" textLength="37.00" lengthAdjust="spacingAndGlyphs">DATA</text>
<text x="883.00" y="104.80" font-size="12.4" font-weight="bold" fill="#111" textLength="31.20" lengthAdjust="spacingAndGlyphs">State</text>
<text x="1082.40" y="104.80" font-size="12.4" font-weight="bold" fill="#111" textLength="33.00" lengthAdjust="spacingAndGlyphs">Abbr.</text>
<text x="1175.70" y="104.80" font-size="12.4" font-weight="bold" fill="#111" textLength="68.80" lengthAdjust="spacingAndGlyphs">YOUR INFO</text>
<text x="1143.00" y="36.30" font-size="35.5" font-weight="bold" fill="#000" textLength="14.50" lengthAdjust="spacingAndGlyphs" stroke="#000" stroke-width="0.3">s</text>
<text x="1185.20" y="36.30" font-size="35.5" fill="#000" textLength="94.07" lengthAdjust="spacingAndGlyphs" stroke="#000" stroke-width="0.9">meka</text>
<text x="1185.90" y="51.40" font-size="11.4" font-weight="bold" fill="#595959" textLength="93.10" lengthAdjust="spacingAndGlyphs">Excel Solutions</text>
<g font-size="14" fill="#fff"><path d="M1104.2 21.3 H1114 M1109.6 16.8 L1114.2 21.3 L1109.6 25.8" stroke="#fff" stroke-width="1.8" fill="none"/></g>
<text x="883.30" y="133.00" font-size="12.6" fill="#1a1a1a" textLength="117.40" lengthAdjust="spacingAndGlyphs" stroke="#1a1a1a" stroke-width="0.25">Schleswig-Holstein</text>
<text x="1091.15" y="133.00" font-size="12.6" fill="#1a1a1a" textLength="15.30" lengthAdjust="spacingAndGlyphs" stroke="#1a1a1a" stroke-width="0.25">SH</text>
<text x="1182.55" y="133.00" font-size="12.6" fill="#1a1a1a" textLength="56.50" lengthAdjust="spacingAndGlyphs" stroke="#1a1a1a" stroke-width="0.25">2.833.000</text>
<text x="883.30" y="170.00" font-size="12.6" fill="#1a1a1a" textLength="56.35" lengthAdjust="spacingAndGlyphs" stroke="#1a1a1a" stroke-width="0.25">Hamburg</text>
<text x="1090.60" y="170.00" font-size="12.6" fill="#1a1a1a" textLength="16.40" lengthAdjust="spacingAndGlyphs" stroke="#1a1a1a" stroke-width="0.25">HH</text>
<text x="1182.55" y="170.00" font-size="12.6" fill="#1a1a1a" textLength="56.50" lengthAdjust="spacingAndGlyphs" stroke="#1a1a1a" stroke-width="0.25">1.788.000</text>
<text x="883.30" y="207.00" font-size="12.6" fill="#1a1a1a" textLength="167.90" lengthAdjust="spacingAndGlyphs" stroke="#1a1a1a" stroke-width="0.25">Mecklenburg-Vorpommern</text>
<text x="1088.75" y="207.00" font-size="12.6" fill="#1a1a1a" textLength="20.10" lengthAdjust="spacingAndGlyphs" stroke="#1a1a1a" stroke-width="0.25">MV</text>
<text x="1182.55" y="207.00" font-size="12.6" fill="#1a1a1a" textLength="56.50" lengthAdjust="spacingAndGlyphs" stroke="#1a1a1a" stroke-width="0.25">1.639.000</text>
<text x="883.30" y="244.00" font-size="12.6" fill="#1a1a1a" textLength="90.81" lengthAdjust="spacingAndGlyphs" stroke="#1a1a1a" stroke-width="0.25">Niedersachsen</text>
<text x="1092.10" y="244.00" font-size="12.6" fill="#1a1a1a" textLength="13.40" lengthAdjust="spacingAndGlyphs" stroke="#1a1a1a" stroke-width="0.25">NI</text>
<text x="1182.55" y="244.00" font-size="12.6" fill="#1a1a1a" textLength="56.50" lengthAdjust="spacingAndGlyphs" stroke="#1a1a1a" stroke-width="0.25">7.914.000</text>
<text x="883.30" y="281.00" font-size="12.6" fill="#1a1a1a" textLength="47.99" lengthAdjust="spacingAndGlyphs" stroke="#1a1a1a" stroke-width="0.25">Bremen</text>
<text x="1090.80" y="281.00" font-size="12.6" fill="#1a1a1a" textLength="16.00" lengthAdjust="spacingAndGlyphs" stroke="#1a1a1a" stroke-width="0.25">HB</text>
<text x="1187.85" y="281.00" font-size="12.6" fill="#1a1a1a" textLength="45.91" lengthAdjust="spacingAndGlyphs" stroke="#1a1a1a" stroke-width="0.25">661.000</text>
<text x="883.30" y="318.00" font-size="12.6" fill="#1a1a1a" textLength="88.90" lengthAdjust="spacingAndGlyphs" stroke="#1a1a1a" stroke-width="0.25">Saxony-Anhalt</text>
<text x="1092.05" y="318.00" font-size="12.6" fill="#1a1a1a" textLength="13.50" lengthAdjust="spacingAndGlyphs" stroke="#1a1a1a" stroke-width="0.25">ST</text>
<text x="1182.55" y="318.00" font-size="12.6" fill="#1a1a1a" textLength="56.50" lengthAdjust="spacingAndGlyphs" stroke="#1a1a1a" stroke-width="0.25">2.331.000</text>
<text x="883.30" y="355.00" font-size="12.6" fill="#1a1a1a" textLength="36.40" lengthAdjust="spacingAndGlyphs" stroke="#1a1a1a" stroke-width="0.25">Berlin</text>
<text x="1091.60" y="355.00" font-size="12.6" fill="#1a1a1a" textLength="14.40" lengthAdjust="spacingAndGlyphs" stroke="#1a1a1a" stroke-width="0.25">BE</text>
<text x="1182.55" y="355.00" font-size="12.6" fill="#1a1a1a" textLength="56.50" lengthAdjust="spacingAndGlyphs" stroke="#1a1a1a" stroke-width="0.25">3.469.000</text>
<text x="883.30" y="392.00" font-size="12.6" fill="#1a1a1a" textLength="79.20" lengthAdjust="spacingAndGlyphs" stroke="#1a1a1a" stroke-width="0.25">Brandenburg</text>
<text x="1090.95" y="392.00" font-size="12.6" fill="#1a1a1a" textLength="15.70" lengthAdjust="spacingAndGlyphs" stroke="#1a1a1a" stroke-width="0.25">BB</text>
<text x="1182.55" y="392.00" font-size="12.6" fill="#1a1a1a" textLength="56.50" lengthAdjust="spacingAndGlyphs" stroke="#1a1a1a" stroke-width="0.25">2.500.000</text>
<text x="883.30" y="429.00" font-size="12.6" fill="#1a1a1a" textLength="48.60" lengthAdjust="spacingAndGlyphs" stroke="#1a1a1a" stroke-width="0.25">Sachsen</text>
<text x="1090.50" y="429.00" font-size="12.6" fill="#1a1a1a" textLength="16.60" lengthAdjust="spacingAndGlyphs" stroke="#1a1a1a" stroke-width="0.25">SN</text>
<text x="1182.55" y="429.00" font-size="12.6" fill="#1a1a1a" textLength="56.50" lengthAdjust="spacingAndGlyphs" stroke="#1a1a1a" stroke-width="0.25">4.143.000</text>
<text x="883.30" y="466.00" font-size="12.6" fill="#1a1a1a" textLength="57.19" lengthAdjust="spacingAndGlyphs" stroke="#1a1a1a" stroke-width="0.25">Thuringia</text>
<text x="1090.20" y="466.00" font-size="12.6" fill="#1a1a1a" textLength="17.20" lengthAdjust="spacingAndGlyphs" stroke="#1a1a1a" stroke-width="0.25">TH</text>
<text x="1182.55" y="466.00" font-size="12.6" fill="#1a1a1a" textLength="56.50" lengthAdjust="spacingAndGlyphs" stroke="#1a1a1a" stroke-width="0.25">2.231.000</text>
<text x="883.30" y="503.00" font-size="12.6" fill="#1a1a1a" textLength="44.30" lengthAdjust="spacingAndGlyphs" stroke="#1a1a1a" stroke-width="0.25">Hessen</text>
<text x="1090.25" y="503.00" font-size="12.6" fill="#1a1a1a" textLength="17.10" lengthAdjust="spacingAndGlyphs" stroke="#1a1a1a" stroke-width="0.25">HE</text>
<text x="1182.55" y="503.00" font-size="12.6" fill="#1a1a1a" textLength="56.50" lengthAdjust="spacingAndGlyphs" stroke="#1a1a1a" stroke-width="0.25">6.066.000</text>
<text x="883.30" y="540.00" font-size="12.6" fill="#1a1a1a" textLength="132.21" lengthAdjust="spacingAndGlyphs" stroke="#1a1a1a" stroke-width="0.25">Nordrhein-Westfalen</text>
<text x="1087.40" y="540.00" font-size="12.6" fill="#1a1a1a" textLength="22.80" lengthAdjust="spacingAndGlyphs" stroke="#1a1a1a" stroke-width="0.25">NW</text>
<text x="1179.02" y="540.00" font-size="12.6" fill="#1a1a1a" textLength="63.56" lengthAdjust="spacingAndGlyphs" stroke="#1a1a1a" stroke-width="0.25">17.837.000</text>
<text x="883.30" y="577.00" font-size="12.6" fill="#1a1a1a" textLength="97.09" lengthAdjust="spacingAndGlyphs" stroke="#1a1a1a" stroke-width="0.25">Rheinland-Pfalz</text>
<text x="1090.90" y="577.00" font-size="12.6" fill="#1a1a1a" textLength="15.80" lengthAdjust="spacingAndGlyphs" stroke="#1a1a1a" stroke-width="0.25">RP</text>
<text x="1182.55" y="577.00" font-size="12.6" fill="#1a1a1a" textLength="56.50" lengthAdjust="spacingAndGlyphs" stroke="#1a1a1a" stroke-width="0.25">4.052.803</text>
<text x="883.30" y="614.00" font-size="12.6" fill="#1a1a1a" textLength="52.20" lengthAdjust="spacingAndGlyphs" stroke="#1a1a1a" stroke-width="0.25">Saarland</text>
<text x="1092.20" y="614.00" font-size="12.6" fill="#1a1a1a" textLength="13.20" lengthAdjust="spacingAndGlyphs" stroke="#1a1a1a" stroke-width="0.25">SL</text>
<text x="1182.55" y="614.00" font-size="12.6" fill="#1a1a1a" textLength="56.50" lengthAdjust="spacingAndGlyphs" stroke="#1a1a1a" stroke-width="0.25">1.018.000</text>
<text x="883.30" y="651.00" font-size="12.6" fill="#1a1a1a" textLength="127.50" lengthAdjust="spacingAndGlyphs" stroke="#1a1a1a" stroke-width="0.25">Baden-Württemberg</text>
<text x="1088.60" y="651.00" font-size="12.6" fill="#1a1a1a" textLength="20.40" lengthAdjust="spacingAndGlyphs" stroke="#1a1a1a" stroke-width="0.25">BW</text>
<text x="1179.02" y="651.00" font-size="12.6" fill="#1a1a1a" textLength="63.56" lengthAdjust="spacingAndGlyphs" stroke="#1a1a1a" stroke-width="0.25">10.755.000</text>
<text x="883.30" y="685.80" font-size="12.6" fill="#1a1a1a" textLength="42.41" lengthAdjust="spacingAndGlyphs" stroke="#1a1a1a" stroke-width="0.25">Bayern</text>
<text x="1091.10" y="685.80" font-size="12.6" fill="#1a1a1a" textLength="15.40" lengthAdjust="spacingAndGlyphs" stroke="#1a1a1a" stroke-width="0.25">BY</text>
<text x="1179.02" y="685.80" font-size="12.6" fill="#1a1a1a" textLength="63.56" lengthAdjust="spacingAndGlyphs" stroke="#1a1a1a" stroke-width="0.25">12.542.000</text>
</svg>
</body></html>
